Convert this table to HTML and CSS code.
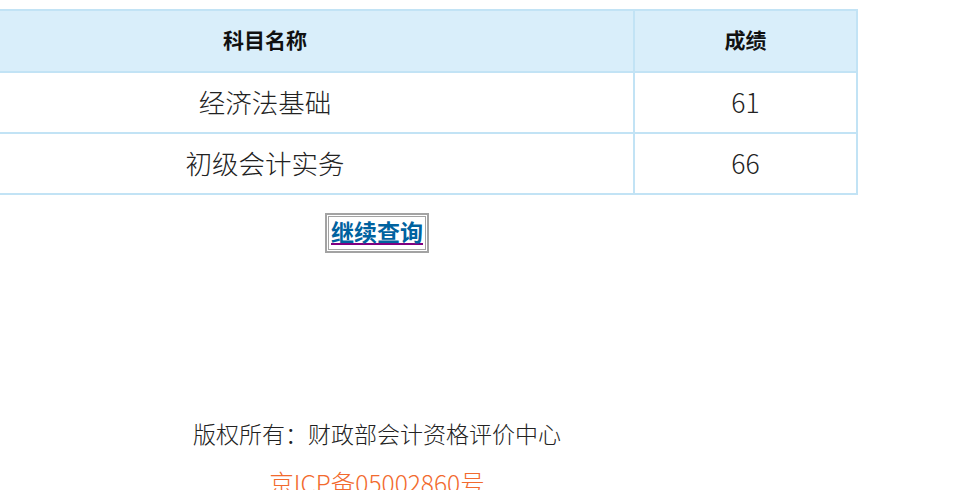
FILE: index.html
```html
<!DOCTYPE html>
<html lang="zh-CN">
<head>
<meta charset="utf-8">
<title>成绩查询</title>
<link rel="stylesheet" href="styles.css">
</head>
<body>
<div class="page">
  <table class="scores">
    <thead>
      <tr><th class="col-name">科目名称</th><th class="col-score">成绩</th></tr>
    </thead>
    <tbody>
      <tr><td>经济法基础</td><td>61</td></tr>
      <tr><td>初级会计实务</td><td>66</td></tr>
    </tbody>
  </table>
  <div class="actions">
    <span class="btn-frame"><span class="btn-inner"><a class="btn-link" href="#"><span class="btn-text">继续查询</span></a></span></span>
  </div>
  <div class="footer">
    <p class="copyright">版权所有：财政部会计资格评价中心</p>
    <p class="icp">京ICP备05002860号</p>
  </div>
</div>
</body>
</html>
```

FILE: styles.css
```css
html, body {
  margin: 0;
  padding: 0;
  background: #ffffff;
  overflow: hidden;
}
body {
  font-family: "PingFang SC", "Noto Sans CJK SC", "Noto Sans", sans-serif;
  color: #111;
}
.page {
  width: 964px;
  margin-left: -105px;
  padding-top: 9px;
}
.scores {
  width: 959px;
  border-collapse: collapse;
  border: 2px solid #c2e3f5;
  table-layout: fixed;
}
.scores th, .scores td {
  border: 2px solid #c2e3f5;
  text-align: center;
  padding: 0;
}
.col-name { width: 736px; }
.col-score { width: 221px; }
.scores th {
  background: #d9eefa;
  height: 56px;
  padding-bottom: 4px;
  font-size: 21px;
  font-weight: bold;
  color: #111;
}
.scores td {
  height: 57px;
  padding-bottom: 2px;
  font-size: 26.5px;
  font-weight: 300;
  color: #222;
}
.actions {
  display: flex;
  justify-content: center;
  margin-top: 18px;
}
.btn-frame {
  display: inline-block;
  border: 2px solid #a3a3a3;
  padding: 1px;
}
.btn-inner {
  display: block;
  border: 1px solid #a3a3a3;
  padding: 0 2px;
  line-height: 29px;
}
.btn-link {
  color: #800080;
  text-decoration: underline;
  text-decoration-thickness: 2px;
  text-underline-offset: 2px;
  font-size: 23px;
  font-weight: bold;
}
.btn-text {
  color: #00629f;
}
.footer {
  margin-top: 165px;
  text-align: center;
}
.copyright {
  margin: 0;
  font-size: 23px;
  line-height: 30px;
  font-weight: 300;
  color: #222;
}
.icp {
  margin: 20px 0 0;
  font-size: 24.5px;
  line-height: 30px;
  font-weight: 300;
  color: #f26a2e;
}
```
